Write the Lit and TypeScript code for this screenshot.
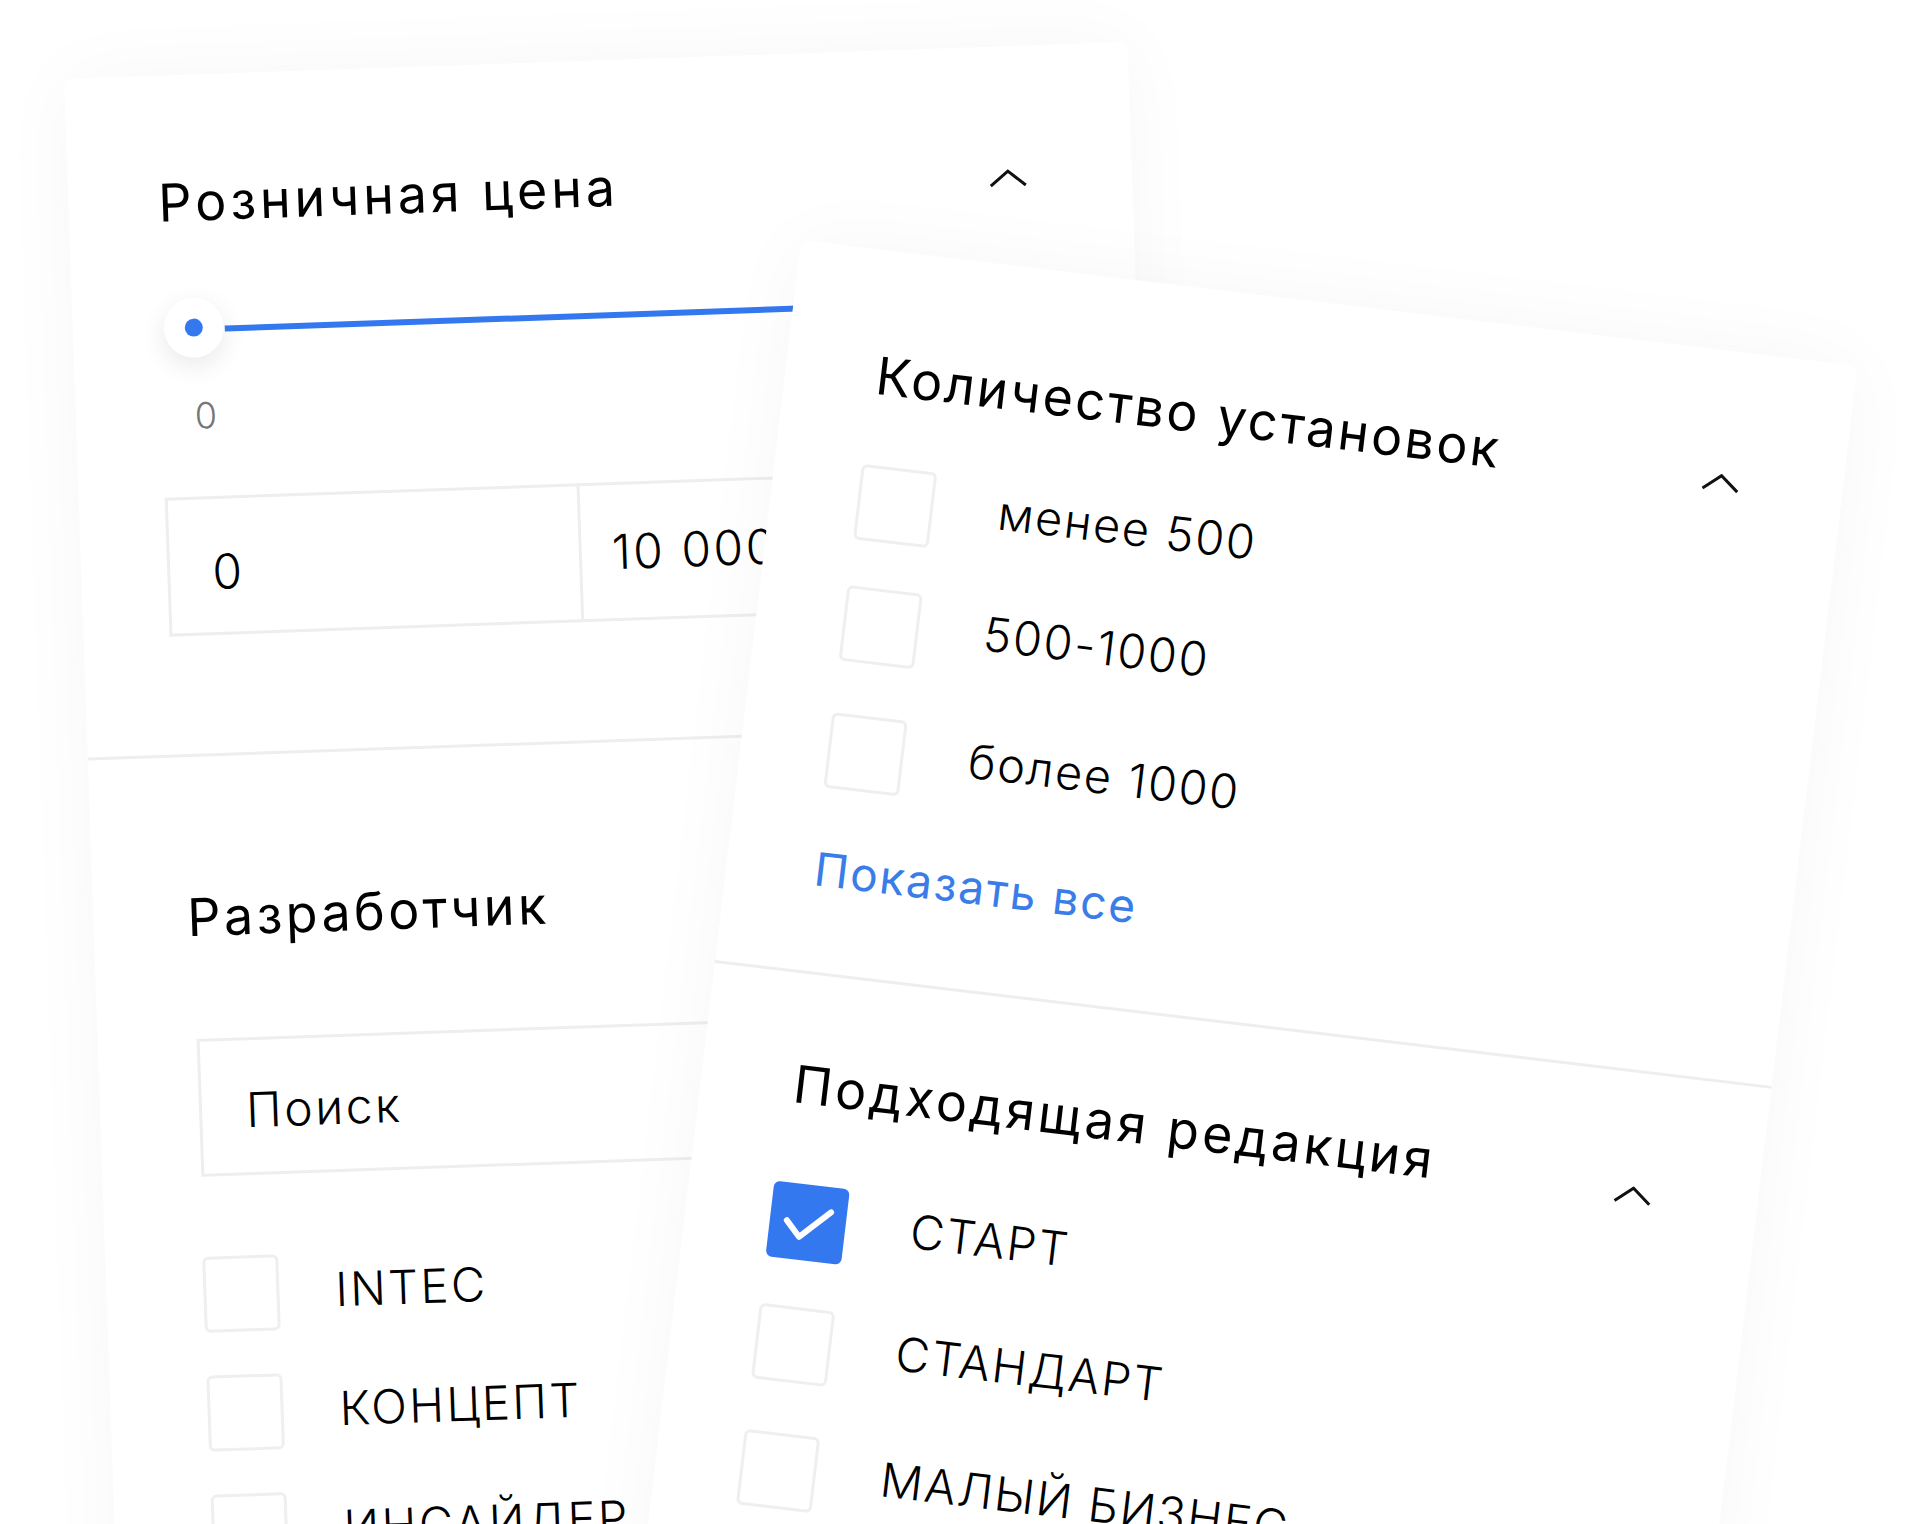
import { LitElement, html, css } from "lit";
import { customElement } from "lit/decorators.js";

const chevron = html`<svg class="chev" viewBox="0 0 38 18" aria-hidden="true"><path d="M1.5 16.5 L19 2 L36.5 16.5" fill="none" stroke="#111" stroke-width="3"/></svg>`;
const check = html`<svg viewBox="0 0 76 76" aria-hidden="true"><path d="M17 38 L31 53 L60 25" fill="none" stroke="#fff" stroke-width="6" stroke-linecap="round" stroke-linejoin="round"/></svg>`;

@customElement("app-root")
export class AppRoot extends LitElement {
  static styles = css`
    :host { display: block; width: 1905px; height: 1524px; overflow: hidden; background: #fff;
      font-family: Inter, "Noto Sans", sans-serif; color: #000; }
    .canvas { position: relative; width: 1905px; height: 1524px; overflow: hidden; }
    .card { position: absolute; width: 1064px; height: 1640px; background: #fff; border-radius: 8px;
      box-shadow: 0 0 80px rgba(0,0,0,.035); transform-origin: 0 0; box-sizing: border-box; }
    .back { left: 64px; top: 79px; transform: rotate(-2deg); }
    .front { left: 801px; top: 240px; transform: rotate(6.8deg); }
    .head { display: flex; justify-content: space-between; align-items: center; height: 48px; }
    .title { font-size: 52px; line-height: 48px; font-weight: 400; letter-spacing: 3.4px; white-space: nowrap; }
    .title.tight { letter-spacing: 2.6px; }
    .title.wide { letter-spacing: 3.9px; }
    .chev { width: 38px; height: 18px; display: block; flex: none; margin-top: 8px; }
    .sec1 { height: 682px; padding: 104px 105px 0 90px; box-sizing: border-box; border-bottom: 3px solid #eee; }
    .slider { display: flex; align-items: center; margin: 71px -105px 0 1px; height: 60px; }
    .handle { width: 60px; height: 60px; border-radius: 50%; background: #fff; flex: none;
      box-shadow: 0 8px 26px rgba(0,0,0,.09); display: flex; align-items: center; justify-content: center; }
    .dot { width: 18px; height: 18px; border-radius: 50%; background: #3478f0; }
    .line { flex: 1; height: 6px; margin-left: 1px; margin-top: 3px; background: #3478f0; }
    .min { margin: 38px 0 0 29px; font-size: 36px; line-height: 40px; font-weight: 300; color: #777; }
    .range { display: grid; grid-template-columns: 412px 414px; height: 139px; width: 826px; margin: 61px 0 0 -4px;
      border: 3px solid #eee; box-sizing: border-box; font-size: 48px; font-weight: 300; letter-spacing: 2.5px; }
    .range div { display: flex; align-items: center; }
    .range div:first-child { padding: 12px 0 0 42px; border-right: 3px solid #eee; }
    .range div:last-child { padding-left: 30px; }
    .sec2 { padding: 137px 0 0 94px; }
    .search { width: 830px; height: 138px; margin: 97px 0 0 5px; border: 3px solid #eee; box-sizing: border-box;
      display: flex; align-items: center; padding: 6px 0 0 44px; font-size: 48px; font-weight: 300; letter-spacing: 2.5px; }
    .list { display: flex; flex-direction: column; }
    .row { display: flex; align-items: center; font-size: 47px; font-weight: 300; letter-spacing: 1.8px; white-space: nowrap; }
    .box { width: 76px; height: 76px; flex: none; box-sizing: border-box; border: 3px solid #efefef; border-radius: 6px; }
    .box svg { display: block; width: 100%; height: 100%; }
    .box.on { background: #3478f0; border-color: #3478f0; }
    .box.on svg { margin: -3px; width: 76px; height: 76px; }
    .devs { margin: 0 0 0 3px; gap: 43px; padding-top: 6px; margin-top: 74px; }
    .devs .box { margin-right: 56px; }
    .devs .row { letter-spacing: 2.4px; }
    .devs .lab { padding-bottom: 4px; }
    .f1 { height: 728px; padding: 102px 103px 0 91px; box-sizing: border-box; border-bottom: 3px solid #eee; }
    .f1 .chev { margin-top: 12px; }
    .installs { margin: 65px 0 0 -4px; }
    .installs .box { margin-right: 65px; }
    .installs .lab { padding-bottom: 13px; }
    .installs .row:nth-child(2) { margin-top: 46px; }
    .installs .row:nth-child(3) { margin-top: 52px; }
    .link { display: block; margin: 57px 0 0 -3px; font-size: 46px; line-height: 48px; color: #3a7de8; letter-spacing: 2px; font-weight: 400; }
    .f2 { padding: 87px 106px 0 93px; }
    .f2 .chev { margin-top: 21px; }
    .eds { margin: 74px 0 0 -8px; }
    .eds .box { margin-right: 65px; }
    .eds .lab { padding-bottom: 10px; }
    .eds .row:nth-child(2) { margin-top: 47px; }
    .eds .row:nth-child(3) { margin-top: 51px; }
  `;

  private row(text: string, on = false) {
    return html`<div class="row"><div class="box ${on ? "on" : ""}">${on ? check : ""}</div><span class="lab">${text}</span></div>`;
  }

  render() {
    return html`<div class="canvas">
      <section class="card back">
        <div class="sec1">
          <div class="head"><span class="title wide">Розничная цена</span>${chevron}</div>
          <div class="slider"><div class="handle"><div class="dot"></div></div><div class="line"></div></div>
          <div class="min">0</div>
          <div class="range"><div>0</div><div>10 000</div></div>
        </div>
        <div class="sec2">
          <div class="title">Разработчик</div>
          <div class="search">Поиск</div>
          <div class="list devs">${["INTEC", "КОНЦЕПТ", "ИНСАЙДЕР"].map((t) => this.row(t))}</div>
        </div>
      </section>
      <section class="card front">
        <div class="f1">
          <div class="head"><span class="title tight">Количество установок</span>${chevron}</div>
          <div class="list installs">${["менее 500", "500-1000", "более 1000"].map((t) => this.row(t))}</div>
          <a class="link">Показать все</a>
        </div>
        <div class="f2">
          <div class="head"><span class="title">Подходящая редакция</span>${chevron}</div>
          <div class="list eds">${this.row("СТАРТ", true)}${this.row("СТАНДАРТ")}${this.row("МАЛЫЙ БИЗНЕС")}</div>
        </div>
      </section>
    </div>`;
  }
}
